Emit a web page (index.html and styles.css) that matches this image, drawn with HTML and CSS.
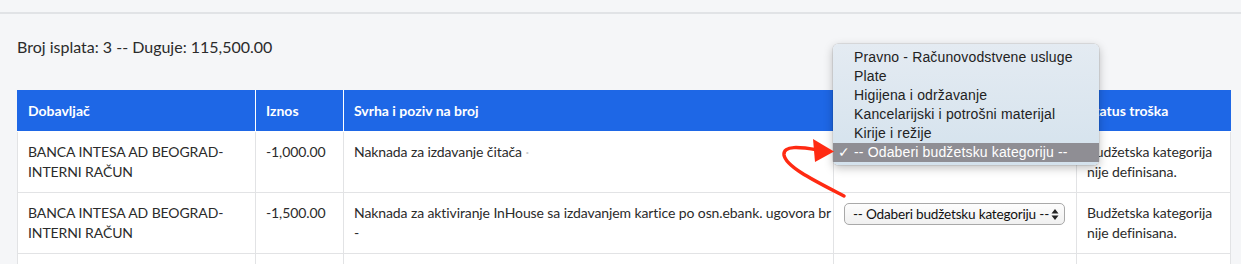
FILE: index.html
```html
<!DOCTYPE html>
<html lang="sr">
<head>
  <meta charset="UTF-8">
  <meta name="viewport" content="width=device-width, initial-scale=1.0">
  <title>Isplate</title>
  <link rel="stylesheet" href="styles.css">
</head>
<body>

  <div class="topbar"></div>

  <div class="content">
    <h4 class="summary">Broj isplata: 3 -- Duguje: 115,500.00</h4>

    <table class="payments">
      <colgroup>
        <col style="width: 238px">
        <col style="width: 88px">
        <col style="width: 490px">
        <col style="width: 243px">
        <col>
      </colgroup>
      <thead>
        <tr>
          <th>Dobavljač</th>
          <th>Iznos</th>
          <th>Svrha i poziv na broj</th>
          <th>Budžetska kategorija</th>
          <th>Status troška</th>
        </tr>
      </thead>
      <tbody>
        <tr>
          <td>BANCA INTESA AD BEOGRAD-<br>INTERNI RAČUN</td>
          <td>-1,000.00</td>
          <td class="purpose">Naknada za izdavanje čitača <span class="faint">·</span></td>
          <td></td>
          <td>Budžetska kategorija nije definisana.</td>
        </tr>
        <tr>
          <td>BANCA INTESA AD BEOGRAD-<br>INTERNI RAČUN</td>
          <td>-1,500.00</td>
          <td class="purpose">Naknada za aktiviranje InHouse sa izdavanjem kartice po osn.ebank. ugovora br<br>-</td>
          <td>
            <div class="select">
              <span>-- Odaberi budžetsku kategoriju --</span>
              <svg width="8" height="13" viewBox="0 0 8 13"><path d="M4 1 L7.5 5.5 H0.5 Z M4 12 L7.5 7.5 H0.5 Z" fill="#222"/></svg>
            </div>
          </td>
          <td>Budžetska kategorija nije definisana.</td>
        </tr>
        <tr>
          <td>&nbsp;</td>
          <td></td>
          <td></td>
          <td></td>
          <td></td>
        </tr>
      </tbody>
    </table>
  </div>

  <!-- open native dropdown of the first row -->
  <ul class="dropdown">
    <li>Pravno - Računovodstvene usluge</li>
    <li>Plate</li>
    <li>Higijena i održavanje</li>
    <li>Kancelarijski i potrošni materijal</li>
    <li>Kirije i režije</li>
    <li class="selected"><span class="check">✓</span>-- Odaberi budžetsku kategoriju --</li>
  </ul>

  <svg class="annotation" width="1241" height="264" viewBox="0 0 1241 264">
    <path d="M818 150 C 800 147 783 145 784 155 C 786 167 815 181 844 196" fill="none" stroke="#ff2a12" stroke-width="3.5" stroke-linecap="round"/>
    <path d="M813 139 L834 151.5 L815 162 Z" fill="#ff2a12"/>
  </svg>

</body>
</html>
```

FILE: styles.css
```css
body {
  margin: 0;
  background: #f5f6f8;
  font-family: "Lato", "Liberation Sans", sans-serif;
  color: #2b2b2b;
}

.topbar {
  height: 12px;
  border-bottom: 2px solid #e1e3e6;
}

.content {
  padding: 21px 10px 0 17px;
}

.summary {
  margin: 0 0 31px;
  font-size: 16px;
  font-weight: normal;
  line-height: 24px;
}

.payments {
  width: 1214px;
  table-layout: fixed;
  border-collapse: collapse;
  background: #fff;
  font-size: 14px;
}

.payments th,
.payments td {
  padding: 10px;
  line-height: 20px;
  text-align: left;
  vertical-align: top;
  border: 1px solid #e2e3e5;
}

.payments td {
  letter-spacing: -0.1px;
}

.payments td.purpose {
  white-space: nowrap;
}

.payments th {
  background: #1e67e6;
  color: #fff;
  font-weight: bold;
  border-color: #fff;
  border-top-color: #1e67e6;
}

.payments thead th:first-child {
  border-left-color: #1e67e6;
}

.payments thead th:last-child {
  border-right-color: #1e67e6;
}

.faint {
  color: #ccc;
}

.select {
  display: flex;
  align-items: center;
  justify-content: space-between;
  width: 221px;
  height: 22px;
  box-sizing: border-box;
  padding: 0 5px 0 8px;
  border: 1px solid #a9a9a9;
  border-radius: 5px;
  background: linear-gradient(#fdfdfd, #f0f0f0);
  color: #111;
  font-size: 13.6px;
  letter-spacing: -0.2px;
  line-height: 20px;
  white-space: nowrap;
}

.dropdown {
  position: absolute;
  left: 833px;
  top: 44px;
  width: 266px;
  margin: 0;
  padding: 4px 0 3px;
  list-style: none;
  box-sizing: border-box;
  border-radius: 5px;
  background: linear-gradient(#e4ebf2, #d4e2ed);
  box-shadow: 0 3px 10px rgba(0, 0, 0, 0.25), 0 0 0 0.5px rgba(0, 0, 0, 0.15);
  font-family: "Liberation Sans", "Lato", sans-serif;
  font-size: 14px;
  letter-spacing: 0.15px;
  color: #222;
}

.dropdown li {
  position: relative;
  height: 19px;
  line-height: 19px;
  padding-left: 21px;
  white-space: nowrap;
}

.dropdown li.selected {
  background: #8f8e94;
  color: #fff;
}

.check {
  position: absolute;
  left: 5px;
  font-size: 14px;
}

.annotation {
  position: absolute;
  left: 0;
  top: 0;
  pointer-events: none;
}
```
